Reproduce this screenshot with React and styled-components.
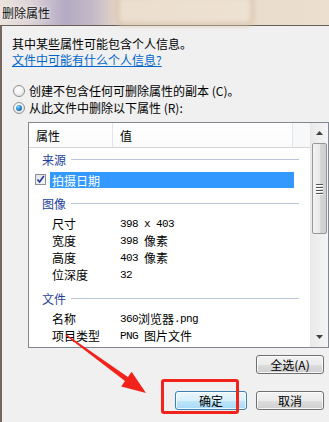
import React from "react";
import styled, { createGlobalStyle, css } from "styled-components";

const GlobalStyle = createGlobalStyle`
  html, body {
    margin: 0;
    padding: 0;
    background: #f0f0f0;
  }
  body {
    font-family: "Noto Sans CJK SC", "Liberation Sans", sans-serif;
    font-size: 12px;
    color: #000;
  }
`;

const Window = styled.div`
  position: relative;
  width: 329px;
  height: 422px;
  overflow: hidden;
  display: flex;
  flex-direction: column;
  background: #f0f0f0;
`;

const TitleBar = styled.div`
  position: relative;
  height: 25px;
  flex-shrink: 0;
  display: flex;
  align-items: center;
  padding-left: 2px;
  border-bottom: 1px solid #6a5d54;
  background: linear-gradient(
    90deg,
    #ebe4dc 0%,
    #ddd4d8 9%,
    #b4abc4 20%,
    #c3b9c8 28%,
    #e4d6c7 36%,
    #ecdfcf 100%
  );

  &::after {
    content: "";
    position: absolute;
    left: 116px;
    top: -6px;
    width: 132px;
    height: 26px;
    border: 3px solid rgba(196, 170, 140, 0.55);
    border-radius: 8px;
    background: rgba(240, 228, 214, 0.6);
    filter: blur(2px);
  }
`;

const Title = styled.span`
  position: relative;
  z-index: 1;
  line-height: 16px;
  color: #111;
  text-shadow: 0 0 4px rgba(255, 255, 255, 0.9);
`;

const Body = styled.div`
  flex: 1;
  display: flex;
  flex-direction: column;
  border-left: 2px solid #74675d;
  padding-left: 10px;
`;

const Intro = styled.div`
  margin-top: 10px;
  line-height: 16px;
  white-space: nowrap;
`;

const HelpLink = styled.a`
  align-self: flex-start;
  line-height: 16px;
  color: #0066cc;
  text-decoration: underline;
  white-space: nowrap;
`;

const RadioGroup = styled.div`
  margin-top: 14px;
  display: flex;
  flex-direction: column;
`;

const RadioRow = styled.label`
  height: 17px;
  display: flex;
  align-items: center;
  gap: 4px;
  white-space: nowrap;
`;

const Radio = styled.span`
  position: relative;
  width: 12px;
  height: 12px;
  margin-left: 1px;
  box-sizing: border-box;
  border-radius: 50%;
  border: 1px solid #8d8f90;
  background: radial-gradient(circle at 40% 35%, #ffffff 0%, #f2f2f2 45%, #d9d9d9 100%);
  flex-shrink: 0;

  ${(p) =>
    p.$checked &&
    css`
      &::after {
        content: "";
        position: absolute;
        left: 2px;
        top: 2px;
        width: 6px;
        height: 6px;
        border-radius: 50%;
        background: radial-gradient(circle at 35% 30%, #8fd6ff 0%, #2a8fd0 45%, #0b4f86 100%);
      }
    `}
`;

const ListBox = styled.div`
  margin-top: 6px;
  margin-left: 16px;
  width: 301px;
  height: 226px;
  box-sizing: border-box;
  flex-shrink: 0;
  border: 1px solid #828790;
  background: #fff;
  display: flex;
  overflow: hidden;
`;

const ListMain = styled.div`
  flex: 1;
  display: flex;
  flex-direction: column;
  overflow: hidden;
`;

const Header = styled.div`
  height: 24px;
  flex-shrink: 0;
  display: flex;
  border-bottom: 1px solid #d5d5d5;
  background: linear-gradient(#ffffff, #fbfbfb);
`;

const HeadCell = styled.div`
  width: ${(p) => (p.$w ? `${p.$w}px` : "auto")};
  flex: ${(p) => (p.$w ? "0 0 auto" : "1")};
  box-sizing: border-box;
  padding-left: 7px;
  display: flex;
  align-items: center;
  border-right: ${(p) => (p.$w ? "1px solid #e3e4e6" : "none")};
  background: ${(p) => (p.$w ? "transparent" : "#f6f8fa")};
`;

const Rows = styled.div`
  display: flex;
  flex-direction: column;
`;

const GroupRow = styled.div`
  height: 22px;
  flex-shrink: 0;
  margin-top: ${(p) => (p.$first ? 0 : 4)}px;
  margin-bottom: 1px;
  padding-left: 13px;
  padding-right: 11px;
  display: flex;
  align-items: center;
  gap: 5px;
  color: #1e3f9e;
  white-space: nowrap;

  &::after {
    content: "";
    flex: 1;
    height: 1px;
    background: #b9c5de;
  }
`;

const ItemRow = styled.div`
  height: 17px;
  flex-shrink: 0;
  display: flex;
  align-items: center;
  white-space: nowrap;
`;

const Label = styled.div`
  width: 68px;
  padding-left: 23px;
  flex-shrink: 0;
`;

const Value = styled.div`
  display: flex;
  align-items: center;
`;

const Latin = styled.span`
  font-family: "Liberation Mono", monospace;
  font-size: 11px;
  letter-spacing: -0.6px;
  white-space: pre;
`;

const Han = styled.span`
  font-family: "Noto Sans CJK SC", sans-serif;
  font-size: 12px;
`;

const CheckBox = styled.span`
  width: 11px;
  height: 11px;
  margin-left: 6px;
  box-sizing: border-box;
  border: 1px solid #8f8f8f;
  background: linear-gradient(135deg, #dfe3ea, #f4f6f9);
  display: flex;
  align-items: center;
  justify-content: center;
  flex-shrink: 0;
`;

const Selected = styled.div`
  margin-left: 4px;
  width: 244px;
  height: 16px;
  margin-top: 1px;
  padding-left: 2px;
  box-sizing: border-box;
  display: flex;
  align-items: center;
  background: #3399ff;
  color: #fff;
`;

const ScrollBar = styled.div`
  width: 17px;
  flex-shrink: 0;
  display: flex;
  flex-direction: column;
  border-left: 1px solid #e6e6e6;
  background: linear-gradient(90deg, #eaeaea, #f4f4f4);
`;

const ArrowBtn = styled.div`
  height: 20px;
  display: flex;
  align-items: center;
  justify-content: center;
  flex-shrink: 0;
`;

const Thumb = styled.div`
  margin: 0 1px;
  height: 91px;
  box-sizing: border-box;
  border: 1px solid #979797;
  border-radius: 2px;
  background: linear-gradient(90deg, #f3f3f3 0%, #e9e9e9 50%, #d6d6d6 51%, #cfcfcf 100%);
  display: flex;
  flex-direction: column;
  align-items: center;
  justify-content: center;
  gap: 2px;
  flex-shrink: 0;
`;

const Grip = styled.span`
  width: 7px;
  height: 1px;
  background: #555;
  box-shadow: 0 1px 0 #fff;
`;

const Track = styled.div`
  flex: 1;
`;

const ButtonRow = styled.div`
  display: flex;
  justify-content: flex-end;
  gap: 9px;
  margin-top: ${(p) => p.$top}px;
  padding-right: 5px;
`;

const Button = styled.div`
  width: ${(p) => p.$w}px;
  height: 19px;
  box-sizing: border-box;
  border-radius: 3px;
  display: flex;
  align-items: center;
  justify-content: center;
  border: 1px solid #707070;
  background: linear-gradient(#f2f2f2 0%, #ebebeb 50%, #dddddd 51%, #cfcfcf 100%);
  box-shadow: inset 0 0 0 1px rgba(255, 255, 255, 0.8);
  line-height: 16px;

  ${(p) =>
    p.$primary &&
    css`
      border-color: #3c7fb1;
      background: linear-gradient(#eaf6fd 0%, #d9f0fc 50%, #bee6fd 51%, #a7d9f5 100%);
    `}
`;

const Annotation = styled.svg`
  position: absolute;
  left: 0;
  top: 0;
  pointer-events: none;
`;

const HighlightBox = styled.div`
  position: absolute;
  left: 161px;
  top: 379px;
  width: 78px;
  height: 35px;
  box-sizing: border-box;
  border: 3px solid #f2231b;
  border-radius: 3px;
  pointer-events: none;
`;

function Mixed({ text }) {
  const parts = text.split(/([\u3000-\u9fff\uff00-\uffef]+)/).filter(Boolean);
  return parts.map((p, i) =>
    /[\u3000-\u9fff\uff00-\uffef]/.test(p) ? <Han key={i}>{p}</Han> : <Latin key={i}>{p}</Latin>
  );
}

const groups = [
  {
    name: "图像",
    items: [
      ["尺寸", "398 x 403"],
      ["宽度", "398 像素"],
      ["高度", "403 像素"],
      ["位深度", "32"],
    ],
  },
  {
    name: "文件",
    items: [
      ["名称", "360浏览器.png"],
      ["项目类型", "PNG 图片文件"],
      ["文件夹路径", "C:\\用户\\xiaotu\\...\\桌面"],
    ],
  },
];

export default function App() {
  return (
    <>
      <GlobalStyle />
      <Window>
        <TitleBar>
          <Title>删除属性</Title>
        </TitleBar>
        <Body>
          <Intro>其中某些属性可能包含个人信息。</Intro>
          <HelpLink>文件中可能有什么个人信息?</HelpLink>
          <RadioGroup>
            <RadioRow>
              <Radio />
              <span>创建不包含任何可删除属性的副本 (C)。</span>
            </RadioRow>
            <RadioRow>
              <Radio $checked />
              <span>从此文件中删除以下属性 (R):</span>
            </RadioRow>
          </RadioGroup>
          <ListBox>
            <ListMain>
              <Header>
                <HeadCell $w={84}>属性</HeadCell>
                <HeadCell $w={180}>值</HeadCell>
                <HeadCell />
              </Header>
              <Rows>
                <GroupRow $first>来源</GroupRow>
                <ItemRow>
                  <CheckBox>
                    <svg width="9" height="9" viewBox="0 0 9 9">
                      <path d="M1.5 4.5 L3.6 7 L7.8 1" fill="none" stroke="#22389a" strokeWidth="1.6" />
                    </svg>
                  </CheckBox>
                  <Selected>拍摄日期</Selected>
                </ItemRow>
                {groups.map((g) => (
                  <React.Fragment key={g.name}>
                    <GroupRow>{g.name}</GroupRow>
                    {g.items.map(([k, v]) => (
                      <ItemRow key={k}>
                        <Label>{k}</Label>
                        <Value>
                          <Mixed text={v} />
                        </Value>
                      </ItemRow>
                    ))}
                  </React.Fragment>
                ))}
              </Rows>
            </ListMain>
            <ScrollBar>
              <ArrowBtn>
                <svg width="7" height="4" viewBox="0 0 7 4">
                  <path d="M0 4 L3.5 0 L7 4 Z" fill="#404040" />
                </svg>
              </ArrowBtn>
              <Thumb>
                <Grip />
                <Grip />
                <Grip />
                <Grip />
              </Thumb>
              <Track />
              <ArrowBtn>
                <svg width="7" height="4" viewBox="0 0 7 4">
                  <path d="M0 0 L7 0 L3.5 4 Z" fill="#404040" />
                </svg>
              </ArrowBtn>
            </ScrollBar>
          </ListBox>
          <ButtonRow $top={7}>
            <Button $w={68}>全选(A)</Button>
          </ButtonRow>
          <ButtonRow $top={17}>
            <Button $w={72} $primary>
              确定
            </Button>
            <Button $w={68}>取消</Button>
          </ButtonRow>
        </Body>
        <HighlightBox />
        <Annotation width="329" height="422" viewBox="0 0 329 422">
          <polygon
            points="66.4,334.5 127.9,377.1 131.6,371.8 146,393 121.2,386.4 125,381.1 65.6,335.5"
            fill="#f2231b"
          />
        </Annotation>
      </Window>
    </>
  );
}
